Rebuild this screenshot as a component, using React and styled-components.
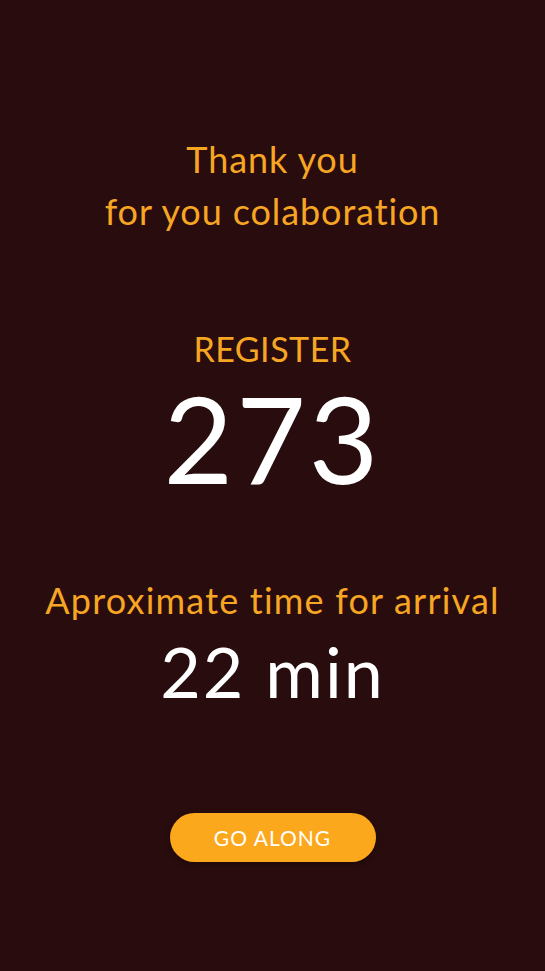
import React from "react";
import styled, { createGlobalStyle } from "styled-components";

const GlobalStyle = createGlobalStyle`
  html, body {
    margin: 0;
    padding: 0;
    background: #290c0e;
  }
  * {
    box-sizing: border-box;
  }
`;

const Screen = styled.div`
  display: flex;
  flex-direction: column;
  align-items: center;
  width: 100%;
  min-height: 971px;
  padding-top: 133px;
  background: #290c0e;
  font-family: Lato, "Open Sans", sans-serif;
  text-align: center;
`;

const Thanks = styled.h1`
  margin: 0;
  font-size: 36px;
  font-weight: 400;
  line-height: 52px;
  letter-spacing: 0.9px;
  color: #f6a623;
`;

const Label = styled.div`
  margin-top: ${(p) => p.$top}px;
  font-size: ${(p) => p.$size}px;
  letter-spacing: ${(p) => p.$spacing}px;
  line-height: 1;
  color: #f6a623;
`;

const Value = styled.div`
  margin-top: ${(p) => p.$top}px;
  font-size: ${(p) => p.$size}px;
  letter-spacing: ${(p) => p.$spacing}px;
  line-height: 1;
  color: #ffffff;
`;

const Button = styled.button`
  margin-top: 107px;
  width: 206px;
  height: 49px;
  border: none;
  border-radius: 25px;
  background: #fca81d;
  color: #ffffff;
  font-family: inherit;
  font-size: 21px;
  letter-spacing: 1px;
  box-shadow: 0 2px 6px rgba(0, 0, 0, 0.35);
  cursor: pointer;
`;

const App = () => (
  <>
    <GlobalStyle />
    <Screen>
      <Thanks>
        Thank you
        <br />
        for you colaboration
      </Thanks>
      <Label $top={95} $size={34} $spacing={0.5}>
        REGISTER
      </Label>
      <Value $top={12} $size={120} $spacing={3}>
        273
      </Value>
      <Label $top={84} $size={36} $spacing={1.2}>
        Aproximate time for arrival
      </Label>
      <Value $top={18} $size={70} $spacing={2}>
        22 min
      </Value>
      <Button>GO ALONG</Button>
    </Screen>
  </>
);

export default App;
